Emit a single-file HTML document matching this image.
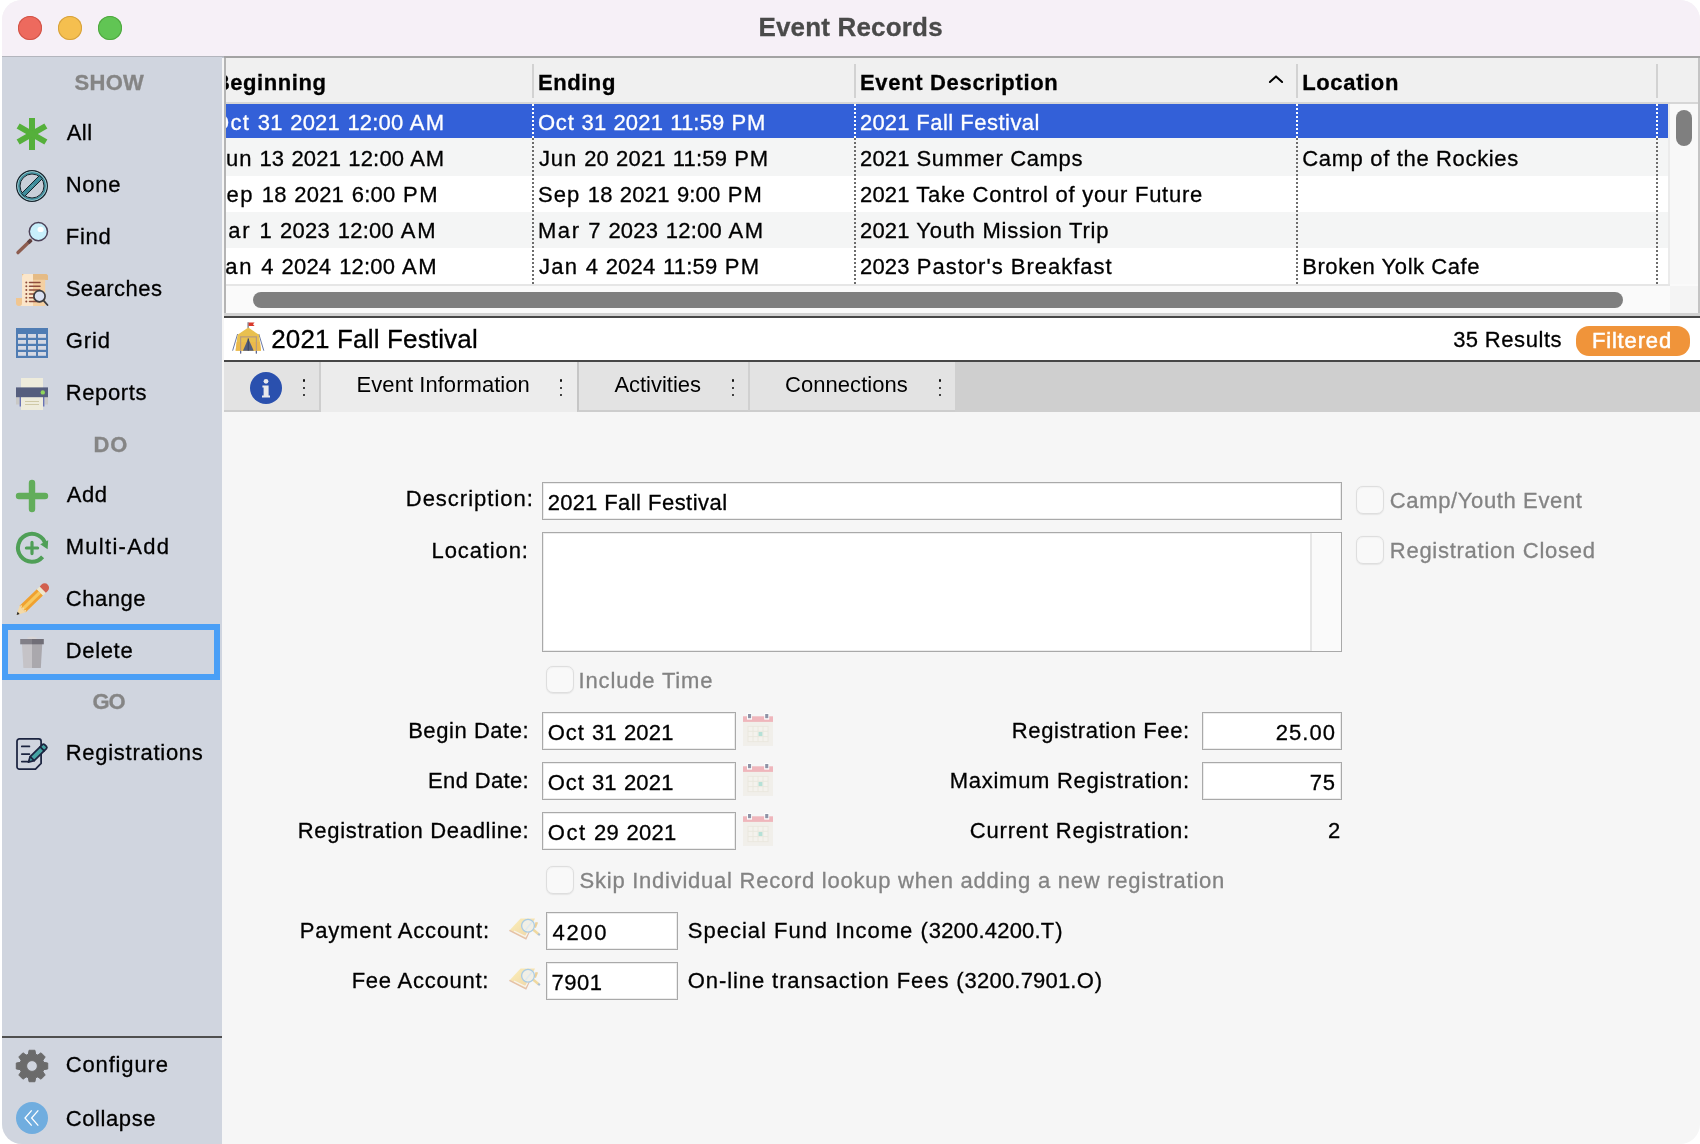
<!DOCTYPE html>
<html><head><meta charset="utf-8"><title>Event Records</title>
<style>
html,body{margin:0;padding:0;background:#fff;}
body{width:1700px;height:1144px;position:relative;overflow:hidden;font-family:"Liberation Sans",sans-serif;}
.t{position:absolute;white-space:pre;color:#000;-webkit-text-stroke-width:0.3px;}
.h{-webkit-text-stroke-width:0;}
#win>div{will-change:transform;}
.r{position:absolute;}
svg{position:absolute;overflow:visible;}
#win{position:absolute;left:2px;top:0;width:1698px;height:1144px;background:#f6f6f6;border-radius:20px;overflow:hidden;}
</style></head><body>

<div id="win"><div style="position:absolute;left:-2px;top:0;width:1700px;height:1144px;">
<div class="r" style="left:0px;top:0px;width:1700px;height:56px;background:#f6f0f7;"></div>
<div class="r" style="left:0px;top:56px;width:1700px;height:1px;background:#b3b5bd;"></div>
<div class="r" style="left:0px;top:57px;width:1700px;height:1px;background:#c4c8d2;"></div>
<div class="r" style="left:18px;top:16px;width:24px;height:24px;background:#ed6a5e;border-radius:50%;box-shadow:inset 0 0 0 1px #d15347;"></div>
<div class="r" style="left:58px;top:16px;width:24px;height:24px;background:#f5bf4f;border-radius:50%;box-shadow:inset 0 0 0 1px #d6a13d;"></div>
<div class="r" style="left:98px;top:16px;width:24px;height:24px;background:#61c554;border-radius:50%;box-shadow:inset 0 0 0 1px #4fa73f;"></div>
<div class="t" style="top:10px;font-size:26px;line-height:34px;font-weight:700;color:#4a4a4a;letter-spacing:0.18px;left:758.42px;">Event Records</div>
<div class="r" style="left:0px;top:57px;width:222px;height:1087px;background:#d0d5df;"></div>
<div class="r" style="left:222px;top:58px;width:2px;height:1086px;background:#f6f6f6;"></div>
<div class="t" style="top:67px;font-size:22px;line-height:31px;font-weight:700;color:#858585;letter-spacing:0.28px;left:74.54px;">SHOW</div>
<div class="t" style="top:429px;font-size:22px;line-height:31px;font-weight:700;color:#858585;letter-spacing:0.71px;left:93.60px;">DO</div>
<div class="t" style="top:686px;font-size:22px;line-height:31px;font-weight:700;color:#858585;letter-spacing:-1.11px;left:92.50px;">GO</div>
<div class="r" style="left:2px;top:624px;width:218px;height:56px;background:#d0d5df;box-sizing:border-box;border:6px solid #4a9ff6;"></div>
<div class="t" style="top:117px;font-size:22px;line-height:31px;letter-spacing:0.47px;left:66.70px;">All</div>
<svg style="left:16px;top:118px" width="32" height="32" viewBox="0 0 32 32"><g fill="#55b03b"><rect x="13" y="0" width="6" height="32"/><rect x="13" y="0" width="6" height="32" transform="rotate(60 16 16)"/><rect x="13" y="0" width="6" height="32" transform="rotate(120 16 16)"/></g></svg>
<div class="t" style="top:169px;font-size:22px;line-height:31px;letter-spacing:0.71px;left:65.70px;">None</div>
<svg style="left:16px;top:170px" width="32" height="32" viewBox="0 0 32 32"><circle cx="16" cy="16" r="15.3" fill="#c9ced8" stroke="#15232b" stroke-width="1.4"/><circle cx="16" cy="16" r="13.4" fill="none" stroke="#3f8d9b" stroke-width="2.4"/><circle cx="16" cy="16" r="14.4" fill="none" stroke="#bfe3e8" stroke-width="0.6"/><circle cx="16" cy="16" r="12" fill="none" stroke="#15232b" stroke-width="1"/><path d="M5.6 23.4 L23.4 5.6 L26.4 8.6 L8.6 26.4Z" fill="#3f8d9b" stroke="#15232b" stroke-width="1"/><path d="M14.6 17.4 l2.8 -2.8" stroke="#9fd0d8" stroke-width="0.8" stroke-dasharray="1 0.8"/></svg>
<div class="t" style="top:221px;font-size:22px;line-height:31px;letter-spacing:0.75px;left:65.70px;">Find</div>
<svg style="left:16px;top:222px" width="32" height="32" viewBox="0 0 32 32"><path d="M2 30.6 L14.5 18.6" stroke="#8d5d50" stroke-width="3.4" stroke-linecap="round"/><path d="M12.2 20.8 L15.2 17.9" stroke="#5e4040" stroke-width="3.8"/><circle cx="22.4" cy="9.6" r="9.1" fill="#c8effb" stroke="#4c4258" stroke-width="1.5"/><ellipse cx="24.6" cy="7.4" rx="3.1" ry="2.7" fill="#fff"/></svg>
<div class="t" style="top:273px;font-size:22px;line-height:31px;letter-spacing:0.48px;left:65.70px;">Searches</div>
<svg style="left:16px;top:274px" width="32" height="32" viewBox="0 0 32 32"><path d="M6 0 H29 a3 3 0 0 1 3 3 v3 H6Z" fill="#e5bb85"/><path d="M8 0 H17 V32 H3 a3 3 0 0 0 3 -3 V3 a3 3 0 0 1 2 -3Z" fill="#fbe6ca"/><path d="M17 5 H29.2 V32 H17Z" fill="#f4d0a2"/><path d="M17 0 H29 a3 3 0 0 1 3 3 V5.8 H17Z" fill="#e5bb85"/><path d="M0 24 H6 V29 a3 3 0 0 1 -6 0Z" fill="#f1c690"/><g stroke="#8d4c3c" stroke-width="1.5" stroke-linecap="round"><path d="M13.5 8.5H24M13.5 12.3H24M13.5 16.100000000000001H24M13.5 20H24M13.5 23.8H24M13.5 27.5H24"/></g><g fill="#8d4c3c"><circle cx="10.3" cy="8.5" r="1"/><circle cx="10.3" cy="12.3" r="1"/><circle cx="10.3" cy="16.1" r="1"/><circle cx="10.3" cy="20" r="1"/><circle cx="10.3" cy="23.8" r="1"/><circle cx="10.3" cy="27.5" r="1"/></g><circle cx="23.5" cy="22.2" r="5.6" fill="#d9e0f1" stroke="#3c3c40" stroke-width="1.7"/><path d="M27.6 26.6 L31.5 31" stroke="#3c3c40" stroke-width="1.8" stroke-linecap="round"/></svg>
<div class="t" style="top:325px;font-size:22px;line-height:31px;letter-spacing:0.92px;left:65.70px;">Grid</div>
<svg style="left:16px;top:326px" width="32" height="32" viewBox="0 0 32 32"><rect x="0" y="2" width="32" height="30" fill="#4f7cb3"/><g fill="#d4d8e3"><rect x="2" y="8" width="8" height="3.8"/><rect x="12" y="8" width="8" height="3.8"/><rect x="22" y="8" width="8" height="3.8"/><rect x="2" y="14" width="8" height="3.8"/><rect x="12" y="14" width="8" height="3.8"/><rect x="22" y="14" width="8" height="3.8"/><rect x="2" y="20" width="8" height="3.8"/><rect x="12" y="20" width="8" height="3.8"/><rect x="22" y="20" width="8" height="3.8"/><rect x="2" y="26" width="8" height="3.8"/><rect x="12" y="26" width="8" height="3.8"/><rect x="22" y="26" width="8" height="3.8"/></g></svg>
<div class="t" style="top:377px;font-size:22px;line-height:31px;letter-spacing:0.64px;left:65.70px;">Reports</div>
<svg style="left:16px;top:378px" width="32" height="32" viewBox="0 0 32 32"><rect x="5" y="0" width="22" height="11" fill="#eeecdc"/><rect x="0" y="13.5" width="3.6" height="13" fill="#c9c8c6"/><rect x="28.4" y="13.5" width="3.6" height="13" fill="#c9c8c6"/><rect x="3.6" y="13.5" width="24.8" height="15" fill="#6973b4"/><rect x="5" y="17" width="22" height="15" fill="#eeecdc"/><rect x="0" y="9.4" width="32" height="9.8" fill="#555e7e"/><circle cx="26.8" cy="14.4" r="2.2" fill="#90d55b"/><path d="M9 23.5H23M9 26.5H23" stroke="#cfc9a6" stroke-width="1"/></svg>
<div class="t" style="top:479px;font-size:22px;line-height:31px;letter-spacing:0.55px;left:66.70px;">Add</div>
<svg style="left:16px;top:480px" width="32" height="32" viewBox="0 0 32 32"><path d="M3 16H29M16 3V29" stroke="#62ad5b" stroke-width="6.4" stroke-linecap="round"/></svg>
<div class="t" style="top:531px;font-size:22px;line-height:31px;letter-spacing:1.29px;left:65.70px;">Multi-Add</div>
<svg style="left:16px;top:532px" width="32" height="32" viewBox="0 0 32 32"><path d="M26.6 24.9 A14 14 0 1 1 29.6 12.6" fill="none" stroke="#4f9f57" stroke-width="4"/><path d="M24.2 12.2 L32.2 8.2 L31.6 17.2Z" fill="#4f9f57"/><path d="M10.4 16H21.6M16 10.4V21.6" stroke="#4f9f57" stroke-width="3.2" stroke-linecap="round"/></svg>
<div class="t" style="top:583px;font-size:22px;line-height:31px;letter-spacing:0.55px;left:65.70px;">Change</div>
<svg style="left:16px;top:584px" width="32" height="32" viewBox="0 0 32 32"><g transform="rotate(-44 16 16)"><path d="M-5.5 16 L3 11.6 V20.4Z" fill="#f4d9a6"/><path d="M-5.5 16 L-2.6 14.5 V17.5Z" fill="#2b2b2b"/><rect x="3" y="11.6" width="24" height="8.8" fill="#f0a12f"/><rect x="3" y="14.4" width="24" height="3.2" fill="#f8c85f"/><path d="M3 11.6 l2.2 1.4 l-2.2 1.4 l2.2 1.6 l-2.2 1.6 l2.2 1.4 l-2.2 1.4Z" fill="#f4d9a6"/><rect x="27" y="11.6" width="4" height="8.8" fill="#efe7cc"/><path d="M31 11.6 h2.6 a4.4 4.4 0 0 1 0 8.8 h-2.6Z" fill="#d2604f"/></g></svg>
<div class="t" style="top:635px;font-size:22px;line-height:31px;letter-spacing:0.67px;left:65.70px;">Delete</div>
<svg style="left:16px;top:636px" width="32" height="32" viewBox="0 0 32 32"><ellipse cx="16" cy="2" rx="4.6" ry="1.5" fill="#d9d7d9"/><path d="M5.9 7 H16 V32 H7.4Z" fill="#c5c3c7"/><path d="M16 7 H26.3 L24.8 32 H16Z" fill="#aaa8ad"/><rect x="4.2" y="3" width="11.8" height="5.3" fill="#817f87"/><rect x="16" y="3" width="11.8" height="5.3" fill="#706e77"/></svg>
<div class="t" style="top:737px;font-size:22px;line-height:31px;letter-spacing:0.73px;left:65.70px;">Registrations</div>
<svg style="left:16px;top:738px" width="32" height="32" viewBox="0 0 32 32"><g fill="none" stroke="#1b2440" stroke-width="1.75" stroke-linecap="round" stroke-linejoin="round"><path d="M25.1 9.6 V3.3 a2.4 2.4 0 0 0 -2.4 -2.4 H3.4 a2.4 2.4 0 0 0 -2.4 2.4 V28.7 a2.4 2.4 0 0 0 2.4 2.4 H19.5 L25.1 25.4 V15.6"/><path d="M5.8 8.4H13.4M5.8 16H13.4M5.8 23.5H11.5"/><path d="M12.4 24.2 L14.2 18.6 L26.4 6.6 a1.6 1.6 0 0 1 2.2 0 L30.4 8.4 a1.6 1.6 0 0 1 0 2.2 L18.2 22.6Z" fill="#45a3a3"/><path d="M14.2 18.6 L18.2 22.6M24.2 8.8 L28.2 12.8"/></g></svg>
<div class="t" style="top:1049px;font-size:22px;line-height:31px;letter-spacing:0.86px;left:65.70px;">Configure</div>
<svg style="left:16px;top:1050px" width="32" height="32" viewBox="0 0 32 32"><path d="M12.37 4.25 L13.06 0.27 L18.94 0.27 L19.63 4.25 L21.74 5.12 L25.04 2.80 L29.20 6.96 L26.88 10.26 L27.75 12.37 L31.73 13.06 L31.73 18.94 L27.75 19.63 L26.88 21.74 L29.20 25.04 L25.04 29.20 L21.74 26.88 L19.63 27.75 L18.94 31.73 L13.06 31.73 L12.37 27.75 L10.26 26.88 L6.96 29.20 L2.80 25.04 L5.12 21.74 L4.25 19.63 L0.27 18.94 L0.27 13.06 L4.25 12.37 L5.12 10.26 L2.80 6.96 L6.96 2.80 L10.26 5.12Z M21.4 16 A5.4 5.4 0 1 0 10.6 16 A5.4 5.4 0 1 0 21.4 16Z" fill="#6b6b6b" fill-rule="evenodd" stroke="#6b6b6b" stroke-width="1" stroke-linejoin="round"/></svg>
<div class="t" style="top:1103px;font-size:22px;line-height:31px;letter-spacing:0.6px;left:65.70px;">Collapse</div>
<svg style="left:16px;top:1102px" width="32" height="32" viewBox="0 0 32 32"><circle cx="16" cy="16" r="16" fill="#70addf"/><path d="M15.7 8.4 L9 16 L15.7 23.6 M22.3 8.4 L15.6 16 L22.3 23.6" fill="none" stroke="#fff" stroke-width="1.3"/></svg>
<div class="r" style="left:2px;top:1036px;width:220px;height:2px;background:#4f4f4f;"></div>
<div class="r" style="left:224px;top:56px;width:1476px;height:2px;background:#a3a3a3;"></div>
<div class="r" style="left:224px;top:58px;width:2px;height:256px;background:#b4b4b4;"></div>
<div class="r" style="left:226px;top:58px;width:1474px;height:46px;background:#f0f0f0;"></div>
<div class="r" style="left:226px;top:102px;width:1472px;height:2px;background:#d6d6d6;"></div>
<div class="r" style="left:226px;top:104px;width:1442px;height:180px;background:#fff;"></div>
<div class="r" style="left:226px;top:104px;width:1442px;height:34px;background:#3360d8;"></div>
<div class="r" style="left:226px;top:138px;width:1442px;height:38px;background:#f4f5f5;"></div>
<div class="r" style="left:226px;top:212px;width:1442px;height:36px;background:#f4f5f5;"></div>
<div class="t" style="top:67px;font-size:22px;line-height:31px;font-weight:700;letter-spacing:0.58px;left:537.90px;">Ending</div>
<div class="t" style="top:67px;font-size:22px;line-height:31px;font-weight:700;letter-spacing:0.67px;left:860.00px;">Event Description</div>
<div class="t" style="top:67px;font-size:22px;line-height:31px;font-weight:700;letter-spacing:0.65px;left:1302.20px;">Location</div>
<div class="t" style="top:107px;font-size:22px;line-height:31px;color:#fff;letter-spacing:0.84px;left:537.90px;">Oct <span style="letter-spacing:0.2px">31</span> <span style="letter-spacing:0.2px">2021</span> <span style="letter-spacing:0.2px">11:59</span> PM</div>
<div class="t" style="top:107px;font-size:22px;line-height:31px;color:#fff;letter-spacing:0.48px;left:860.00px;"><span style="letter-spacing:0.2px">2021</span> Fall Festival</div>
<div class="t" style="top:143px;font-size:22px;line-height:31px;letter-spacing:0.91px;left:538.90px;">Jun <span style="letter-spacing:0.2px">20</span> <span style="letter-spacing:0.2px">2021</span> <span style="letter-spacing:0.2px">11:59</span> PM</div>
<div class="t" style="top:143px;font-size:22px;line-height:31px;letter-spacing:0.64px;left:860.00px;"><span style="letter-spacing:0.2px">2021</span> Summer Camps</div>
<div class="t" style="top:143px;font-size:22px;line-height:31px;letter-spacing:0.66px;left:1302.20px;">Camp of the Rockies</div>
<div class="t" style="top:179px;font-size:22px;line-height:31px;letter-spacing:1.14px;left:537.90px;">Sep <span style="letter-spacing:0.2px">18</span> <span style="letter-spacing:0.2px">2021</span> <span style="letter-spacing:0.2px">9:00</span> PM</div>
<div class="t" style="top:179px;font-size:22px;line-height:31px;letter-spacing:0.75px;left:860.00px;"><span style="letter-spacing:0.2px">2021</span> Take Control of your Future</div>
<div class="t" style="top:215px;font-size:22px;line-height:31px;letter-spacing:1.59px;left:537.90px;">Mar <span style="letter-spacing:0.2px">7</span> <span style="letter-spacing:0.2px">2023</span> <span style="letter-spacing:0.2px">12:00</span> AM</div>
<div class="t" style="top:215px;font-size:22px;line-height:31px;letter-spacing:0.78px;left:860.00px;"><span style="letter-spacing:0.2px">2021</span> Youth Mission Trip</div>
<div class="t" style="top:251px;font-size:22px;line-height:31px;letter-spacing:1.33px;left:538.90px;">Jan <span style="letter-spacing:0.2px">4</span> <span style="letter-spacing:0.2px">2024</span> <span style="letter-spacing:0.2px">11:59</span> PM</div>
<div class="t" style="top:251px;font-size:22px;line-height:31px;letter-spacing:1.0px;left:860.00px;"><span style="letter-spacing:0.2px">2023</span> Pastor's Breakfast</div>
<div class="t" style="top:251px;font-size:22px;line-height:31px;letter-spacing:0.57px;left:1302.20px;">Broken Yolk Cafe</div>
<div class="r" style="left:226px;top:59px;width:306px;height:226px;overflow:hidden;"><div style="position:absolute;left:-226px;top:-59px;width:1700px;height:1144px;">
<div class="t" style="top:67px;font-size:22px;line-height:31px;font-weight:700;letter-spacing:0.55px;left:213.90px;">Beginning</div>
<div class="t" style="top:107px;font-size:22px;line-height:31px;color:#fff;letter-spacing:1.37px;left:212.03px;">Oct <span style="letter-spacing:0.2px">31</span> <span style="letter-spacing:0.2px">2021</span> <span style="letter-spacing:0.2px">12:00</span> AM</div>
<div class="t" style="top:143px;font-size:22px;line-height:31px;letter-spacing:0.97px;left:213.98px;">Jun <span style="letter-spacing:0.2px">13</span> <span style="letter-spacing:0.2px">2021</span> <span style="letter-spacing:0.2px">12:00</span> AM</div>
<div class="t" style="top:179px;font-size:22px;line-height:31px;letter-spacing:1.56px;left:210.22px;">Sep <span style="letter-spacing:0.2px">18</span> <span style="letter-spacing:0.2px">2021</span> <span style="letter-spacing:0.2px">6:00</span> PM</div>
<div class="t" style="top:215px;font-size:22px;line-height:31px;letter-spacing:1.91px;left:207.98px;">Mar <span style="letter-spacing:0.2px">1</span> <span style="letter-spacing:0.2px">2023</span> <span style="letter-spacing:0.2px">12:00</span> AM</div>
<div class="t" style="top:251px;font-size:22px;line-height:31px;letter-spacing:1.77px;left:212.52px;">Jan <span style="letter-spacing:0.2px">4</span> <span style="letter-spacing:0.2px">2024</span> <span style="letter-spacing:0.2px">12:00</span> AM</div>
</div></div>
<div class="r" style="left:532px;top:64px;width:2px;height:34px;background:#d2d2d2;"></div>
<div class="r" style="left:532px;top:104px;width:2px;height:34px;background:repeating-linear-gradient(180deg,#fff 0 2px,transparent 2px 4px);"></div>
<div class="r" style="left:532px;top:138px;width:2px;height:146px;background:repeating-linear-gradient(180deg,#6c6c6c 0 2px,transparent 2px 4px);"></div>
<div class="r" style="left:854px;top:64px;width:2px;height:34px;background:#d2d2d2;"></div>
<div class="r" style="left:854px;top:104px;width:2px;height:34px;background:repeating-linear-gradient(180deg,#fff 0 2px,transparent 2px 4px);"></div>
<div class="r" style="left:854px;top:138px;width:2px;height:146px;background:repeating-linear-gradient(180deg,#6c6c6c 0 2px,transparent 2px 4px);"></div>
<div class="r" style="left:1296px;top:64px;width:2px;height:34px;background:#d2d2d2;"></div>
<div class="r" style="left:1296px;top:104px;width:2px;height:34px;background:repeating-linear-gradient(180deg,#fff 0 2px,transparent 2px 4px);"></div>
<div class="r" style="left:1296px;top:138px;width:2px;height:146px;background:repeating-linear-gradient(180deg,#6c6c6c 0 2px,transparent 2px 4px);"></div>
<div class="r" style="left:1656px;top:64px;width:2px;height:34px;background:#d2d2d2;"></div>
<div class="r" style="left:1656px;top:104px;width:2px;height:34px;background:repeating-linear-gradient(180deg,#fff 0 2px,transparent 2px 4px);"></div>
<div class="r" style="left:1656px;top:138px;width:2px;height:146px;background:repeating-linear-gradient(180deg,#6c6c6c 0 2px,transparent 2px 4px);"></div>
<svg style="left:1268px;top:74px" width="16" height="12" viewBox="0 0 16 12"><path d="M1.9 8 L8 2.4 L14.1 8" fill="none" stroke="#000" stroke-width="2" stroke-linecap="round" stroke-linejoin="round"/></svg>
<div class="r" style="left:1668px;top:104px;width:30px;height:181px;background:#f8f8f8;"></div>
<div class="r" style="left:1668px;top:104px;width:2px;height:181px;background:#ebebeb;"></div>
<div class="r" style="left:1676px;top:110px;width:16px;height:36px;background:#7f7f7f;border-radius:8px;"></div>
<div class="r" style="left:226px;top:284px;width:1472px;height:29px;background:#fafafa;"></div>
<div class="r" style="left:226px;top:284px;width:1444px;height:2px;background:#e6e6e6;"></div>
<div class="r" style="left:1670px;top:286px;width:28px;height:27px;background:#f4f4f4;"></div>
<div class="r" style="left:253px;top:292px;width:1370px;height:16px;background:#7f7f7f;border-radius:8px;"></div>
<div class="r" style="left:1698px;top:58px;width:2px;height:256px;background:#c4c4c4;"></div>
<div class="r" style="left:224px;top:313px;width:1476px;height:3px;background:#d2d2d2;"></div>
<div class="r" style="left:224px;top:316px;width:1476px;height:2px;background:#474747;"></div>
<div class="r" style="left:224px;top:318px;width:1476px;height:42px;background:#fff;"></div>
<div class="r" style="left:224px;top:360px;width:1476px;height:2px;background:#474747;"></div>
<svg style="left:232px;top:322px" width="32" height="32" viewBox="0 0 32 32"><path d="M16.1 0.3V6" stroke="#5b6270" stroke-width="1.1"/><path d="M16.6 0.5 H22.6 L21 2.3 L22.6 4.1 H16.6Z" fill="#d8392b"/><path d="M5.6 12 L0.6 28.7 M26.8 12 L31.8 28.7" stroke="#5a6a9c" stroke-width="0.9"/><path d="M16.3 5.6 L27 12.7 L29 28.7 H3.6 L5.6 12.7Z" fill="#e9c04f"/><path d="M4.6 20 H28 L29 28.7 H3.6Z" fill="#ebb64a" opacity="0.8"/><path d="M16.3 16.4 L21.7 28.7 H10.9Z" fill="#525d7e"/><path d="M16.3 16.4V28.7" stroke="#3f4862" stroke-width="1.2"/><path d="M8.6 31.6 V14.9 H24.4 V31.6" fill="none" stroke="#b99b7c" stroke-width="1.2"/><path d="M8.6 29 v2.6 M24.4 29 v2.6" stroke="#5a6a9c" stroke-width="1.2"/></svg>
<div class="t" style="top:322px;font-size:26px;line-height:34px;letter-spacing:0.16px;left:271.20px;"><span style="letter-spacing:0.15980009191176403px">2021</span> Fall Festival</div>
<div class="t" style="top:324px;font-size:22px;line-height:31px;letter-spacing:0.57px;left:1453.27px;"><span style="letter-spacing:0.2px">35</span> Results</div>
<div class="r" style="left:1576px;top:326px;width:114px;height:29.5px;background:#f0943a;border-radius:13px;"></div>
<div class="t" style="top:325px;font-size:22px;line-height:31px;color:#fff;letter-spacing:0.84px;left:1591.90px;-webkit-text-stroke:0.5px #fff;">Filtered</div>
<div class="r" style="left:224px;top:362px;width:1476px;height:50px;background:#cfcfcf;"></div>
<div class="r" style="left:224px;top:362px;width:97px;height:50px;background:#e3e3e3;box-sizing:border-box;border-right:2px solid #cecece;border-bottom:2px solid #cdcdcd;"></div>
<div class="r" style="left:321px;top:362px;width:256px;height:50px;background:#ececec;"></div>
<div class="r" style="left:577px;top:362px;width:172px;height:50px;background:#e3e3e3;box-sizing:border-box;border-left:2px solid #c6c6c6;border-right:1px solid #d0d0d0;border-bottom:2px solid #cdcdcd;"></div>
<div class="r" style="left:749px;top:362px;width:206px;height:50px;background:#e3e3e3;box-sizing:border-box;border-left:1px solid #d0d0d0;border-bottom:2px solid #cdcdcd;"></div>
<div class="t" style="top:369px;font-size:22px;line-height:31px;letter-spacing:0.05px;left:356.60px;-webkit-text-stroke-width:0;">Event Information</div>
<div class="t" style="top:369px;font-size:22px;line-height:31px;letter-spacing:-0.02px;left:614.40px;-webkit-text-stroke-width:0;">Activities</div>
<div class="t" style="top:369px;font-size:22px;line-height:31px;letter-spacing:0.05px;left:785.00px;-webkit-text-stroke-width:0;">Connections</div>
<div class="r" style="left:302.7px;top:379.4px;width:2.6px;height:2.6px;background:#111;border-radius:0.9px;"></div>
<div class="r" style="left:302.7px;top:386.5px;width:2.6px;height:2.6px;background:#111;border-radius:0.9px;"></div>
<div class="r" style="left:302.7px;top:393.59999999999997px;width:2.6px;height:2.6px;background:#111;border-radius:0.9px;"></div>
<div class="r" style="left:559.7px;top:379.4px;width:2.6px;height:2.6px;background:#111;border-radius:0.9px;"></div>
<div class="r" style="left:559.7px;top:386.5px;width:2.6px;height:2.6px;background:#111;border-radius:0.9px;"></div>
<div class="r" style="left:559.7px;top:393.59999999999997px;width:2.6px;height:2.6px;background:#111;border-radius:0.9px;"></div>
<div class="r" style="left:731.7px;top:379.4px;width:2.6px;height:2.6px;background:#111;border-radius:0.9px;"></div>
<div class="r" style="left:731.7px;top:386.5px;width:2.6px;height:2.6px;background:#111;border-radius:0.9px;"></div>
<div class="r" style="left:731.7px;top:393.59999999999997px;width:2.6px;height:2.6px;background:#111;border-radius:0.9px;"></div>
<div class="r" style="left:938.7px;top:379.4px;width:2.6px;height:2.6px;background:#111;border-radius:0.9px;"></div>
<div class="r" style="left:938.7px;top:386.5px;width:2.6px;height:2.6px;background:#111;border-radius:0.9px;"></div>
<div class="r" style="left:938.7px;top:393.59999999999997px;width:2.6px;height:2.6px;background:#111;border-radius:0.9px;"></div>
<svg style="left:250px;top:372px" width="32" height="32" viewBox="0 0 32 32"><circle cx="16" cy="16" r="16" fill="#2a50ae"/><g fill="#e9e9ec"><circle cx="16" cy="9.3" r="2.4"/><path d="M12.4 13.6 H18.6 V23.6 H20 V25.4 H12 V23.6 H13.6 V15.4 H12.4Z"/></g></svg>
<div class="t" style="top:483px;font-size:22px;line-height:31px;letter-spacing:1.0px;left:405.76px;">Description:</div>
<div class="r" style="left:542px;top:482px;width:800px;height:38px;background:#fff;box-sizing:border-box;border:1px solid #a9a9a9;box-shadow:inset 0 0 0 1px #ececec;"></div>
<div class="t" style="top:487px;font-size:22px;line-height:31px;letter-spacing:0.47px;left:547.80px;"><span style="letter-spacing:0.2px">2021</span> Fall Festival</div>
<div class="t" style="top:535px;font-size:22px;line-height:31px;letter-spacing:0.88px;left:431.58px;">Location:</div>
<div class="r" style="left:542px;top:532px;width:800px;height:120px;background:#fff;box-sizing:border-box;border:1px solid #a9a9a9;box-shadow:inset 0 0 0 1px #ececec;"></div>
<div class="r" style="left:1310px;top:533px;width:2px;height:118px;background:#e6e6e6;"></div>
<div class="r" style="left:1312px;top:533px;width:29px;height:118px;background:#fafafa;"></div>
<div class="r" style="left:546.1px;top:665.6px;width:27.8px;height:27.8px;background:#f9f9f9;box-sizing:border-box;border:1.2px solid #dedede;border-radius:7px;box-shadow:0 0.5px 1.2px rgba(0,0,0,0.07), inset 0 1px 1.5px rgba(0,0,0,0.03);"></div>
<div class="t" style="top:665px;font-size:22px;line-height:31px;color:#838383;letter-spacing:0.83px;left:578.60px;">Include Time</div>
<div class="r" style="left:1356.1px;top:485.90000000000003px;width:27.8px;height:27.8px;background:#f9f9f9;box-sizing:border-box;border:1.2px solid #dedede;border-radius:7px;box-shadow:0 0.5px 1.2px rgba(0,0,0,0.07), inset 0 1px 1.5px rgba(0,0,0,0.03);"></div>
<div class="t" style="top:485px;font-size:22px;line-height:31px;color:#838383;letter-spacing:0.63px;left:1389.80px;">Camp/Youth Event</div>
<div class="r" style="left:1356.1px;top:535.9px;width:27.8px;height:27.8px;background:#f9f9f9;box-sizing:border-box;border:1.2px solid #dedede;border-radius:7px;box-shadow:0 0.5px 1.2px rgba(0,0,0,0.07), inset 0 1px 1.5px rgba(0,0,0,0.03);"></div>
<div class="t" style="top:535px;font-size:22px;line-height:31px;color:#838383;letter-spacing:0.73px;left:1389.80px;">Registration Closed</div>
<div class="t" style="top:715px;font-size:22px;line-height:31px;letter-spacing:0.56px;left:408.15px;">Begin Date:</div>
<div class="t" style="top:765px;font-size:22px;line-height:31px;letter-spacing:0.35px;left:428.07px;">End Date:</div>
<div class="t" style="top:815px;font-size:22px;line-height:31px;letter-spacing:0.69px;left:297.77px;">Registration Deadline:</div>
<div class="r" style="left:542px;top:712px;width:194px;height:38px;background:#fff;box-sizing:border-box;border:1px solid #a9a9a9;box-shadow:inset 0 0 0 1px #ececec;"></div>
<div class="t" style="top:717px;font-size:22px;line-height:31px;letter-spacing:0.95px;left:547.80px;">Oct <span style="letter-spacing:0.2px">31</span> <span style="letter-spacing:0.2px">2021</span></div>
<svg style="left:742px;top:712px" width="32" height="32" viewBox="0 0 32 32"><rect x="1" y="4.3" width="30" height="29.6" fill="#f1efea"/><rect x="1" y="4.3" width="30" height="5.6" fill="#efb6bc"/><g fill="#fdfdfd"><rect x="5" y="1.2" width="5" height="6.4"/><rect x="22.2" y="1.2" width="5" height="6.4"/></g><g fill="#8e93a6"><rect x="6" y="2" width="3.1" height="4.2"/><rect x="23.2" y="2" width="3.1" height="4.2"/></g><rect x="6" y="14.3" width="20" height="15.4" fill="#f4f2ed" stroke="#e9e6dd" stroke-width="0.8"/><path d="M11 14.3v15.4M16 14.3v15.4M21 14.3v15.4M6 19.4h20M6 24.6h20" stroke="#e9e6dd" stroke-width="0.9"/><rect x="16.6" y="20" width="3.8" height="4" fill="#b5e0d6"/></svg>
<div class="r" style="left:542px;top:762px;width:194px;height:38px;background:#fff;box-sizing:border-box;border:1px solid #a9a9a9;box-shadow:inset 0 0 0 1px #ececec;"></div>
<div class="t" style="top:767px;font-size:22px;line-height:31px;letter-spacing:0.95px;left:547.80px;">Oct <span style="letter-spacing:0.2px">31</span> <span style="letter-spacing:0.2px">2021</span></div>
<svg style="left:742px;top:762px" width="32" height="32" viewBox="0 0 32 32"><rect x="1" y="4.3" width="30" height="29.6" fill="#f1efea"/><rect x="1" y="4.3" width="30" height="5.6" fill="#efb6bc"/><g fill="#fdfdfd"><rect x="5" y="1.2" width="5" height="6.4"/><rect x="22.2" y="1.2" width="5" height="6.4"/></g><g fill="#8e93a6"><rect x="6" y="2" width="3.1" height="4.2"/><rect x="23.2" y="2" width="3.1" height="4.2"/></g><rect x="6" y="14.3" width="20" height="15.4" fill="#f4f2ed" stroke="#e9e6dd" stroke-width="0.8"/><path d="M11 14.3v15.4M16 14.3v15.4M21 14.3v15.4M6 19.4h20M6 24.6h20" stroke="#e9e6dd" stroke-width="0.9"/><rect x="16.6" y="20" width="3.8" height="4" fill="#b5e0d6"/></svg>
<div class="r" style="left:542px;top:812px;width:194px;height:38px;background:#fff;box-sizing:border-box;border:1px solid #a9a9a9;box-shadow:inset 0 0 0 1px #ececec;"></div>
<div class="t" style="top:817px;font-size:22px;line-height:31px;letter-spacing:1.49px;left:547.80px;">Oct <span style="letter-spacing:0.2px">29</span> <span style="letter-spacing:0.2px">2021</span></div>
<svg style="left:742px;top:812px" width="32" height="32" viewBox="0 0 32 32"><rect x="1" y="4.3" width="30" height="29.6" fill="#f1efea"/><rect x="1" y="4.3" width="30" height="5.6" fill="#efb6bc"/><g fill="#fdfdfd"><rect x="5" y="1.2" width="5" height="6.4"/><rect x="22.2" y="1.2" width="5" height="6.4"/></g><g fill="#8e93a6"><rect x="6" y="2" width="3.1" height="4.2"/><rect x="23.2" y="2" width="3.1" height="4.2"/></g><rect x="6" y="14.3" width="20" height="15.4" fill="#f4f2ed" stroke="#e9e6dd" stroke-width="0.8"/><path d="M11 14.3v15.4M16 14.3v15.4M21 14.3v15.4M6 19.4h20M6 24.6h20" stroke="#e9e6dd" stroke-width="0.9"/><rect x="16.6" y="20" width="3.8" height="4" fill="#b5e0d6"/></svg>
<div class="t" style="top:715px;font-size:22px;line-height:31px;letter-spacing:0.61px;left:1011.83px;">Registration Fee:</div>
<div class="t" style="top:765px;font-size:22px;line-height:31px;letter-spacing:0.72px;left:949.76px;">Maximum Registration:</div>
<div class="t" style="top:815px;font-size:22px;line-height:31px;letter-spacing:0.82px;left:969.74px;">Current Registration:</div>
<div class="r" style="left:1202px;top:712px;width:140px;height:38px;background:#fff;box-sizing:border-box;border:1px solid #a9a9a9;box-shadow:inset 0 0 0 1px #ececec;"></div>
<div class="t" style="top:717px;font-size:22px;line-height:31px;letter-spacing:1.05px;left:1275.80px;"><span style="letter-spacing:1.04541015625px">25.00</span></div>
<div class="r" style="left:1202px;top:762px;width:140px;height:38px;background:#fff;box-sizing:border-box;border:1px solid #a9a9a9;box-shadow:inset 0 0 0 1px #ececec;"></div>
<div class="t" style="top:767px;font-size:22px;line-height:31px;letter-spacing:0.76px;left:1309.80px;"><span style="letter-spacing:0.7646484375px">75</span></div>
<div class="t" style="top:815px;font-size:22px;line-height:31px;left:1328.00px;">2</div>
<div class="r" style="left:546.1px;top:865.8000000000001px;width:27.8px;height:27.8px;background:#f9f9f9;box-sizing:border-box;border:1.2px solid #dedede;border-radius:7px;box-shadow:0 0.5px 1.2px rgba(0,0,0,0.07), inset 0 1px 1.5px rgba(0,0,0,0.03);"></div>
<div class="t" style="top:865px;font-size:22px;line-height:31px;color:#838383;letter-spacing:0.75px;left:579.60px;">Skip Individual Record lookup when adding a new registration</div>
<div class="t" style="top:915px;font-size:22px;line-height:31px;letter-spacing:0.79px;left:299.83px;">Payment Account:</div>
<div class="t" style="top:965px;font-size:22px;line-height:31px;letter-spacing:0.76px;left:351.63px;">Fee Account:</div>
<svg style="left:508px;top:914px" width="32" height="32" viewBox="0 0 32 32"><defs><linearGradient id="lg1" x1="0" y1="0" x2="1" y2="1"><stop offset="0" stop-color="#fbefb8"/><stop offset="1" stop-color="#efd3a6"/></linearGradient></defs><path d="M12.6 4.4 H27 L17.9 24.8 L1.4 16.4Z" fill="url(#lg1)"/><path d="M1.4 16.4 L17.9 24.8 L22 16" fill="none" stroke="#e4c0a8" stroke-width="1.4"/><path d="M6 17 L17.5 22.6 L20.5 17" fill="none" stroke="#f6f3ee" stroke-width="1.2"/><path d="M27.5 8 l2.6 0.4 l-2.2 5.6 l-1.8 -1Z" fill="#ecd09a"/><path d="M25 15.6 L31 20.4" stroke="#f0d9a0" stroke-width="2.6"/><path d="M30.2 19.6 l1.6 1.6" stroke="#a9c0d8" stroke-width="2"/><circle cx="20" cy="11.7" r="6.4" fill="#f1efe6" stroke="#a9cbe4" stroke-width="1.3"/><path d="M17.5 16 L24 8" stroke="#dfe9ef" stroke-width="1.6"/></svg>
<svg style="left:508px;top:964px" width="32" height="32" viewBox="0 0 32 32"><defs><linearGradient id="lg2" x1="0" y1="0" x2="1" y2="1"><stop offset="0" stop-color="#fbefb8"/><stop offset="1" stop-color="#efd3a6"/></linearGradient></defs><path d="M12.6 4.4 H27 L17.9 24.8 L1.4 16.4Z" fill="url(#lg2)"/><path d="M1.4 16.4 L17.9 24.8 L22 16" fill="none" stroke="#e4c0a8" stroke-width="1.4"/><path d="M6 17 L17.5 22.6 L20.5 17" fill="none" stroke="#f6f3ee" stroke-width="1.2"/><path d="M27.5 8 l2.6 0.4 l-2.2 5.6 l-1.8 -1Z" fill="#ecd09a"/><path d="M25 15.6 L31 20.4" stroke="#f0d9a0" stroke-width="2.6"/><path d="M30.2 19.6 l1.6 1.6" stroke="#a9c0d8" stroke-width="2"/><circle cx="20" cy="11.7" r="6.4" fill="#f1efe6" stroke="#a9cbe4" stroke-width="1.3"/><path d="M17.5 16 L24 8" stroke="#dfe9ef" stroke-width="1.6"/></svg>
<div class="r" style="left:546px;top:912px;width:132px;height:38px;background:#fff;box-sizing:border-box;border:1px solid #a9a9a9;box-shadow:inset 0 0 0 1px #ececec;"></div>
<div class="t" style="top:917px;font-size:22px;line-height:31px;letter-spacing:1.63px;left:552.60px;"><span style="letter-spacing:1.6313151041666671px">4200</span></div>
<div class="r" style="left:546px;top:962px;width:132px;height:38px;background:#fff;box-sizing:border-box;border:1px solid #a9a9a9;box-shadow:inset 0 0 0 1px #ececec;"></div>
<div class="t" style="top:967px;font-size:22px;line-height:31px;letter-spacing:0.5px;left:551.60px;"><span style="letter-spacing:0.4979817708333343px">7901</span></div>
<div class="t" style="top:915px;font-size:22px;line-height:31px;letter-spacing:0.99px;left:687.80px;">Special Fund Income (<span style="letter-spacing:0.2px">3200.4200.</span>T)</div>
<div class="t" style="top:965px;font-size:22px;line-height:31px;letter-spacing:0.91px;left:687.80px;">On-line transaction Fees (<span style="letter-spacing:0.2px">3200.7901.</span>O)</div>
</div></div>
</body></html>
